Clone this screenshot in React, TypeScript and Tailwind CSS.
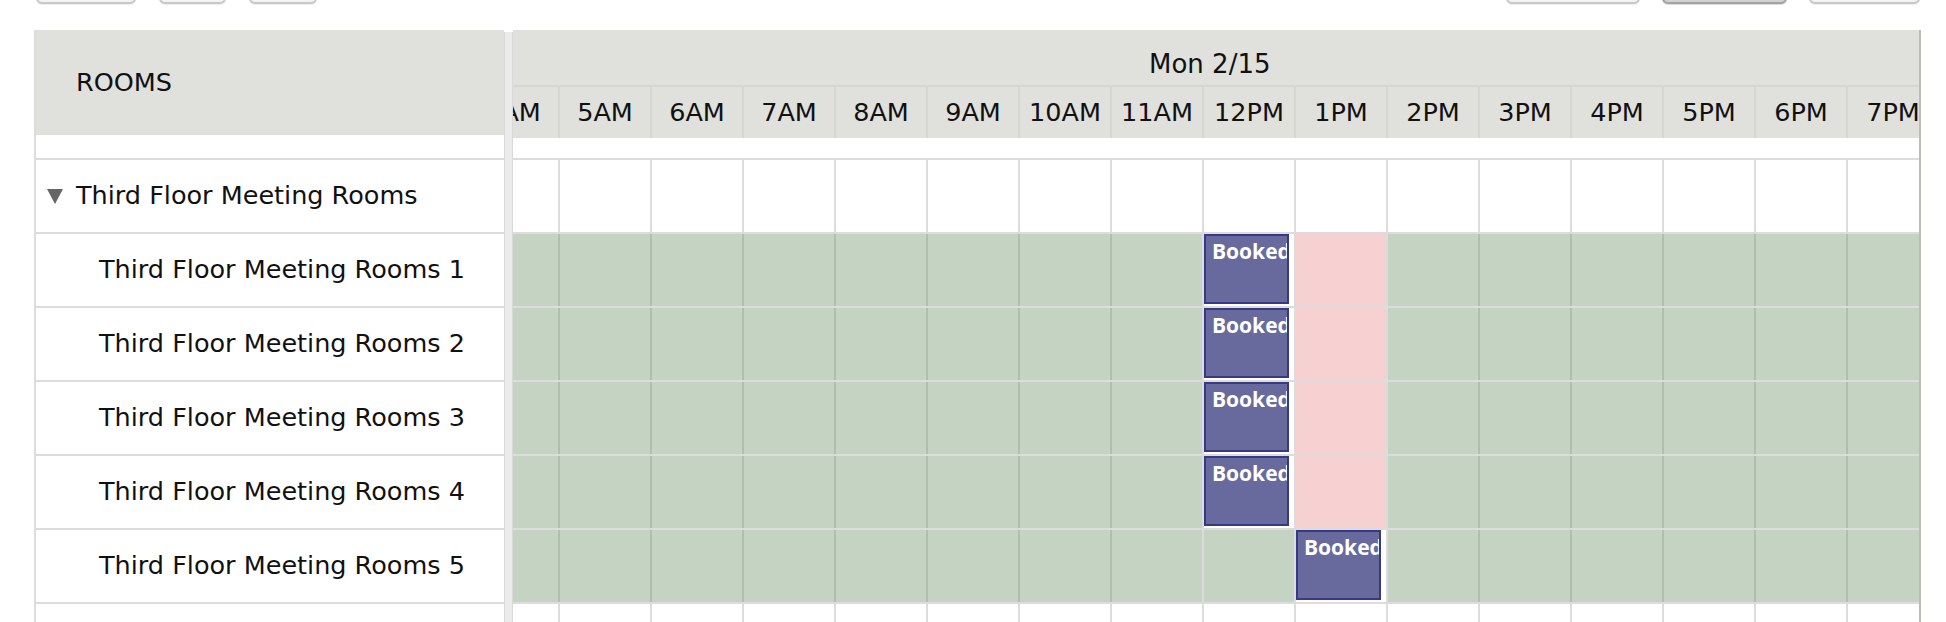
import clsx from "clsx";

type Kind = "white" | "green" | "pink" | "booked";

interface Cell {
  kind: Kind;
  seg: number;
}

const HOURS = [
  "4AM", "5AM", "6AM", "7AM", "8AM", "9AM", "10AM", "11AM",
  "12PM", "1PM", "2PM", "3PM", "4PM", "5PM", "6PM", "7PM",
];

const ROOMS = [1, 2, 3, 4, 5];

// availability per room, hour index 0 = 4AM
const cellsFor = (room: number): Cell[] =>
  HOURS.map((_, i) => {
    const hour = i + 4;
    if (room < 5) {
      if (hour <= 11) return { kind: "green", seg: 0 };
      if (hour === 12) return { kind: "booked", seg: 1 };
      if (hour === 13) return { kind: "pink", seg: 2 };
      return { kind: "green", seg: 3 };
    }
    if (hour <= 11) return { kind: "green", seg: 0 };
    if (hour === 12) return { kind: "green", seg: 1 };
    if (hour === 13) return { kind: "booked", seg: 2 };
    return { kind: "green", seg: 3 };
  });

const emptyCells: Cell[] = HOURS.map(() => ({ kind: "white", seg: 0 }));

const ToolButton = ({ width, active }: { width: string; active?: boolean }) => (
  <div
    className={clsx(
      "h-[40px] -mt-[36px] rounded-[6px] border-2",
      width,
      active
        ? "bg-[#d2d2d2] border-[#a3a3a3] shadow-[0_1px_1px_rgba(0,0,0,0.15)]"
        : "bg-[#f3f3f3] border-[#c8c8c8] shadow-[0_1px_1px_rgba(0,0,0,0.08)]"
    )}
  />
);

const GridRow = ({ cells }: { cells: Cell[] }) => (
  <div className="flex h-[74px] shrink-0 border-t-2 border-[#dcdcdc] ml-[-47px]">
    {cells.map((c, i) => {
      const prev = cells[i - 1];
      const darkLine = c.kind === "green" && prev && prev.kind === "green" && prev.seg === c.seg;
      return (
        <div
          key={i}
          className={clsx(
            "w-[92px] h-full shrink-0 border-l-2",
            darkLine ? "border-[#aebfad]" : "border-[#dcdcdc]",
            c.kind === "green" && "bg-[#c5d3c3]",
            c.kind === "pink" && "bg-[#f7d0d2]",
            (c.kind === "white" || c.kind === "booked") && "bg-white"
          )}
        >
          {c.kind === "booked" && (
            <div className="w-[85px] h-[70px] border-2 border-[#373984] bg-[#686a9e] overflow-hidden whitespace-nowrap pl-[6px] pt-[5px] font-['Open_Sans',sans-serif] text-[21px] leading-none font-bold text-white">
              Booked
            </div>
          )}
        </div>
      );
    })}
  </div>
);

export default function App() {
  return (
    <div className="h-[622px] w-full overflow-hidden bg-white pl-[34px] pr-[25px] font-['DejaVu_Sans',sans-serif] text-[#111]">
      {/* toolbar, only the bottom edge of the buttons is in view */}
      <div className="flex h-[4px] justify-between">
        <div className="flex gap-[23px] pl-[2px]">
          <ToolButton width="w-[100px]" />
          <ToolButton width="w-[67px]" />
          <ToolButton width="w-[68px]" />
        </div>
        <div className="flex gap-[22px] pr-[1px]">
          <ToolButton width="w-[134px]" />
          <ToolButton width="w-[125px]" active />
          <ToolButton width="w-[111px]" />
        </div>
      </div>

      <div className="mt-[26px] flex h-[600px] border-l-2 border-[#dcdcdc]">
        {/* rooms column */}
        <div className="flex w-[468px] shrink-0 flex-col">
          <div className="flex h-[105px] shrink-0 items-center bg-[#e0e0dc] pl-[40px] text-[25.5px] leading-none">
            ROOMS
          </div>
          <div className="h-[23px] shrink-0 bg-white" />
          <div className="flex h-[74px] shrink-0 items-center gap-[13px] border-t-2 border-[#dcdcdc] pl-[11px] text-[25.5px] leading-none">
            <svg width="16" height="15" viewBox="0 0 16 15">
              <path d="M0 0 H16 L8 15 Z" fill="#666" />
            </svg>
            <span>Third Floor Meeting Rooms</span>
          </div>
          {ROOMS.map((n) => (
            <div
              key={n}
              className="flex h-[74px] shrink-0 items-center border-t-2 border-[#dcdcdc] pl-[63px] text-[25.5px] leading-none"
            >
              Third Floor Meeting Rooms {n}
            </div>
          ))}
          <div className="h-[74px] shrink-0 border-t-2 border-[#dcdcdc]" />
        </div>

        {/* splitter */}
        <div className="mt-[2px] w-[9px] shrink-0 border-x border-[#d9d9d9] bg-[#ebebeb]" />

        {/* timeline */}
        <div className="flex min-w-0 flex-1 flex-col overflow-hidden border-r-2 border-[#bcbcb8]">
          <div className="shrink-0 bg-[#e0e0dc]">
            <div className="h-[55px] pl-[636px] pt-[21px] text-[26px] leading-none whitespace-nowrap">
              Mon 2/15
            </div>
            <div className="ml-[-47px] flex h-[53px] border-t-2 border-[#d6d6d2]">
              {HOURS.map((h) => (
                <div
                  key={h}
                  className="flex w-[92px] shrink-0 items-center justify-center border-l-2 border-[#d6d6d2] text-[25.5px] leading-none"
                >
                  {h}
                </div>
              ))}
            </div>
          </div>
          <div className="h-[20px] shrink-0 bg-white" />
          <GridRow cells={emptyCells} />
          {ROOMS.map((n) => (
            <GridRow key={n} cells={cellsFor(n)} />
          ))}
          <GridRow cells={emptyCells} />
        </div>
      </div>
    </div>
  );
}
